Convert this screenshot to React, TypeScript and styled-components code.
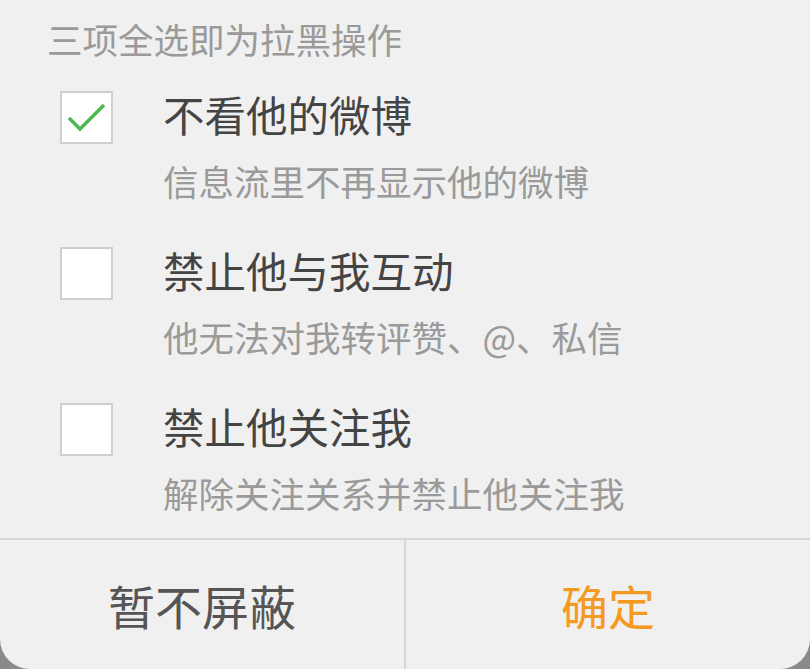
import React, { useState } from 'react';
import styled, { createGlobalStyle } from 'styled-components';

const GlobalStyle = createGlobalStyle`
  html, body {
    margin: 0;
    padding: 0;
    background: #8a8a8a;
  }
  body {
    font-family: "Noto Sans CJK SC", "Noto Sans", sans-serif;
  }
`

const Dialog = styled.div`
  width: 810px;
  height: 669px;
  background: #f0f0f0;
  border-radius: 0 0 30px 30px;
  overflow: hidden;
  display: flex;
  flex-direction: column;
`

const Hint = styled.div`
  padding: 21px 0 0 47px;
  font-size: 35.5px;
  line-height: 36px;
  color: #9a9a9a;
`

const OptionList = styled.ul`
  list-style: none;
  margin: 34px 0 0;
  padding: 0 0 27px 60px;
  display: flex;
  flex-direction: column;
  gap: 48px;
  flex-grow: 1;
`

const Option = styled.li`
  display: grid;
  grid-template-columns: 53px 1fr;
  column-gap: 50px;
  align-items: start;
  cursor: pointer;
`

const Box = styled.span<{ $checked: boolean }>`
  box-sizing: border-box;
  width: 53px;
  height: 53px;
  background: #fff;
  border: 2px solid #cfcfcf;
  display: flex;
  align-items: center;
  justify-content: center;
  > svg {
    visibility: ${p => (p.$checked ? 'visible' : 'hidden')};
  }
`

const Title = styled.span`
  font-size: 41.5px;
  line-height: 47px;
  color: #444;
`

const Desc = styled.span`
  grid-column: 2;
  margin-top: 19px;
  font-size: 35.5px;
  line-height: 36px;
  color: #9a9a9a;
`

const Footer = styled.div`
  height: 130px;
  border-top: 2px solid #d6d6d6;
  display: flex;
`

const Action = styled.button<{ $primary?: boolean }>`
  flex: 1;
  background: none;
  border: none;
  padding: 0;
  font-family: inherit;
  font-size: 47px;
  color: ${p => (p.$primary ? '#f59a20' : '#555')};
  & + & {
    border-left: 2px solid #d6d6d6;
  }
`

const options = [
  { title: '不看他的微博', desc: '信息流里不再显示他的微博' },
  { title: '禁止他与我互动', desc: '他无法对我转评赞、@、私信' },
  { title: '禁止他关注我', desc: '解除关注关系并禁止他关注我' },
]

function Check() {
  return (
    <svg width="49" height="49" viewBox="0 0 49 49">
      <polyline points="7,25 18,36 42,12" fill="none" stroke="#4cb84f" strokeWidth="3.5" />
    </svg>
  )
}

function App() {
  const [checked, setChecked] = useState([true, false, false])
  const toggle = (i: number) => setChecked(c => c.map((v, j) => (j === i ? !v : v)))

  return (
    <>
      <GlobalStyle />
      <Dialog>
        <Hint>三项全选即为拉黑操作</Hint>
        <OptionList>
          {options.map((o, i) => (
            <Option key={o.title} onClick={() => toggle(i)}>
              <Box $checked={checked[i]}><Check /></Box>
              <Title>{o.title}</Title>
              <Desc>{o.desc}</Desc>
            </Option>
          ))}
        </OptionList>
        <Footer>
          <Action>暂不屏蔽</Action>
          <Action $primary>确定</Action>
        </Footer>
      </Dialog>
    </>
  )
}

export default App
